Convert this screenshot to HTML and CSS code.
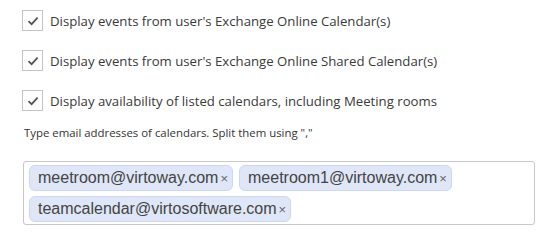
FILE: index.html
```html
<!DOCTYPE html>
<html>
<head>
<meta charset="utf-8">
<link rel="stylesheet" href="styles.css">
</head>
<body>
<div class="panel">
  <label class="check-row">
    <span class="box"><svg width="14" height="14" viewBox="0 0 14 14"><path d="M2.5 7.2 L5.6 10.2 L11.6 3.6" fill="none" stroke="#555" stroke-width="1.8"/></svg></span>
    <span class="label">Display events from user's Exchange Online Calendar(s)</span>
  </label>
  <label class="check-row">
    <span class="box"><svg width="14" height="14" viewBox="0 0 14 14"><path d="M2.5 7.2 L5.6 10.2 L11.6 3.6" fill="none" stroke="#555" stroke-width="1.8"/></svg></span>
    <span class="label">Display events from user's Exchange Online Shared Calendar(s)</span>
  </label>
  <label class="check-row">
    <span class="box"><svg width="14" height="14" viewBox="0 0 14 14"><path d="M2.5 7.2 L5.6 10.2 L11.6 3.6" fill="none" stroke="#555" stroke-width="1.8"/></svg></span>
    <span class="label">Display availability of listed calendars, including Meeting rooms</span>
  </label>
  <p class="hint">Type email addresses of calendars. Split them using ","</p>
  <div class="tags">
    <span class="tag">meetroom@virtoway.com<span class="x">×</span></span>
    <span class="tag">meetroom1@virtoway.com<span class="x">×</span></span>
    <span class="tag">teamcalendar@virtosoftware.com<span class="x">×</span></span>
  </div>
</div>
</body>
</html>
```
FILE: styles.css
```css
html, body {
  margin: 0;
  padding: 0;
  background: #fff;
}
.panel {
  padding: 10px 22px 0 22px;
  width: 512px;
}
.check-row {
  display: flex;
  align-items: center;
  height: 21px;
  margin-bottom: 19px;
}
.box {
  width: 19px;
  height: 19px;
  border: 1px solid #c4c4c4;
  box-sizing: content-box;
  display: flex;
  align-items: center;
  justify-content: center;
  background: #fff;
}
.label {
  margin-left: 7px;
  font-family: "Open Sans", sans-serif;
  font-size: 13.2px;
  color: #3a3a3a;
}
.hint {
  margin: -4px 0 21px 2px;
  padding: 0;
  font-family: "Open Sans", sans-serif;
  font-size: 11.4px;
  line-height: 14px;
  color: #333;
}
.tags {
  border: 1px solid #c8c8c8;
  border-radius: 3px;
  margin-left: 1px;
  width: 512px;
  height: 64px;
  box-sizing: border-box;
  padding: 3px 5px;
  display: flex;
  flex-wrap: wrap;
  align-content: flex-start;
  gap: 5px 6px;
}
.tag {
  display: inline-flex;
  align-items: center;
  height: 26px;
  box-sizing: border-box;
  padding: 0 4px 0 8px;
  background: #dfe6f7;
  border: 1px solid #cdd8f0;
  border-radius: 6px;
  font-family: "Liberation Sans", Arial, sans-serif;
  font-size: 16px;
  color: #444;
}
.x {
  font-size: 13px;
  color: #666;
  margin-left: 2px;
}
```
